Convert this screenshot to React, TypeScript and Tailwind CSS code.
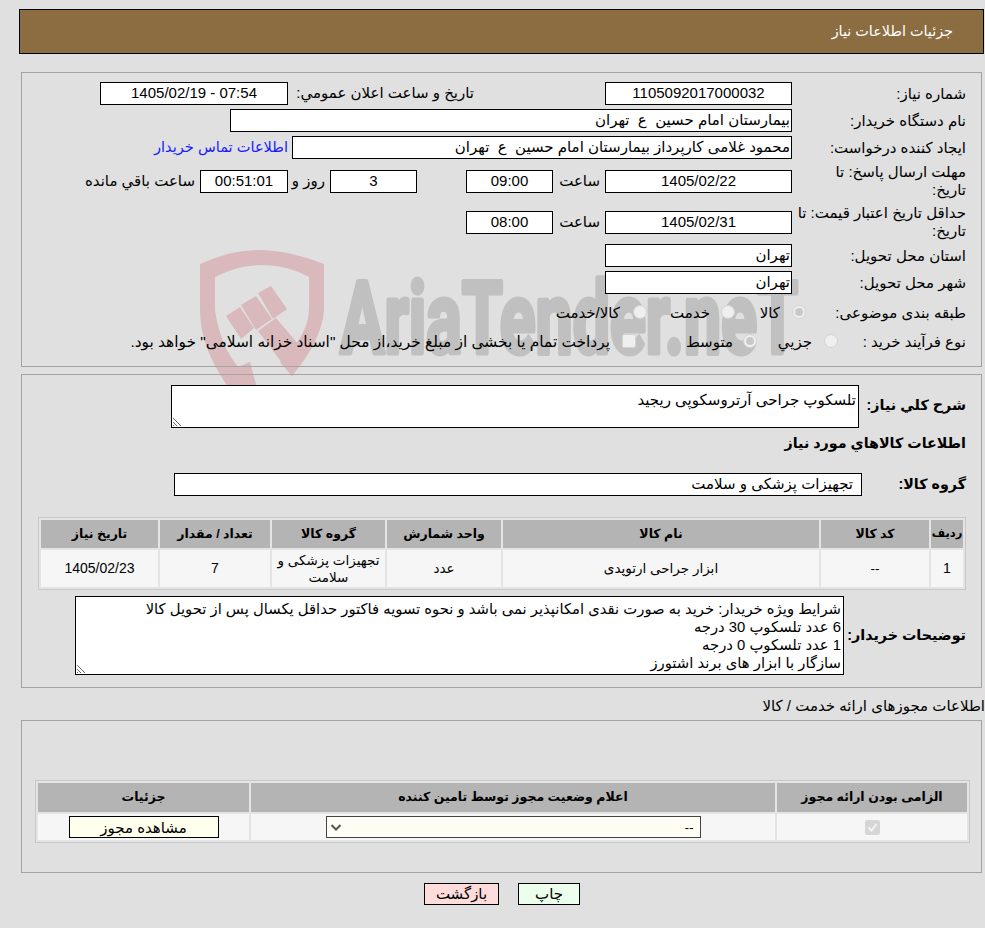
const font = "font-['Liberation_Sans','DejaVu_Sans',sans-serif]";

function Box({ className = "", children }: { className?: string; children?: React.ReactNode }) {
  return (
    <div className={`flex h-[23px] shrink-0 items-center justify-center border border-black bg-white text-[15px] text-black ${className}`}>
      {children}
    </div>
  );
}

function Label({ className = "w-[174px]", children }: { className?: string; children: React.ReactNode }) {
  return <div className={`shrink-0 pl-[4px] text-right text-[15px] leading-[18px] ${className}`}>{children}</div>;
}

function Radio({ checked = false }: { checked?: boolean }) {
  return (
    <span className="-mt-[3px] flex h-[14px] w-[14px] shrink-0 items-center justify-center rounded-full border border-[#d2d2d2] bg-[#efefef]">
      {checked && <span className="h-[8px] w-[8px] rounded-full bg-[#c8c8c8]" />}
    </span>
  );
}

function Watermark() {
  return (
    <svg className="absolute left-[195px] top-[245px] [direction:ltr]" width="620" height="150" viewBox="195 245 620 150" fill="none">
      <path
        d="M262 250 Q295 252 324 264 L324 310 Q322 340 292 376 L280 362 Q309 335 309 308 L309 277 Q287 265 262 265 Q238 265 215 277 L215 310 Q220 345 238 367 L250 362 L258 392 L232 392 Q200 350 200 310 L200 264 Q230 250 262 250 Z"
        fill="#d9b9bb"
      />
      <path
        d="M226 316 L240 307 L254 328 L241 339 Z M241 305 L256 296 L272 319 L256 330 Z M258 293 L271 286 L287 309 L273 319 Z M258 331 L276 318 L305 352 L292 376 Z"
        fill="#d9b9bb"
      />
      <text
        x="340"
        y="353"
        fontFamily="Roboto, sans-serif"
        fontWeight="700"
        fontSize="100"
        fill="#c0c0c0"
        stroke="#c0c0c0"
        strokeWidth="5"
        strokeLinejoin="round"
        textLength="458"
        lengthAdjust="spacingAndGlyphs"
      >
        AriaTender.neT
      </text>
    </svg>
  );
}

function Grip() {
  return (
    <svg className="absolute bottom-0 left-0" width="11" height="11" viewBox="0 0 11 11" stroke="#666" strokeWidth="1">
      <path d="M1 2 L9 10 M1 6 L5 10 M1 9 L2 10" />
    </svg>
  );
}

function Th({ className = "text-[12.5px]", children }: { className?: string; children: React.ReactNode }) {
  return <th className={`bg-[#b4b4b4] text-center align-middle font-bold text-black ${className}`}>{children}</th>;
}

function Td({ className = "text-[13.5px]", children }: { className?: string; children?: React.ReactNode }) {
  return <td className={`bg-[#f6f6f6] text-center align-middle leading-[17px] text-black ${className}`}>{children}</td>;
}

export default function App() {
  return (
    <div dir="rtl" className={`relative isolate h-[928px] w-[985px] overflow-hidden bg-[#e0e0e0] text-black ${font}`}>
      <Watermark />
      <div className="relative pt-[9px]">
        <div className="mr-[1px] ml-[19px] flex h-[45px] items-center border border-black bg-[#8c6d42] pr-[30px] text-[14.4px] text-white">
          جزئیات اطلاعات نیاز
        </div>

        <div className="mt-[18px] mr-[3px] ml-[21px] h-[295px] border border-[#a3a3a3] pt-[9px] pr-[15px]">
          <div className="flex h-[23px] items-center">
            <Label>شماره نیاز:</Label>
            <Box className="w-[187px]">1105092017000032</Box>
            <div className="mr-[131px] w-[186px] whitespace-nowrap text-[15px]">تاریخ و ساعت اعلان عمومي:</div>
            <Box className="w-[188px]">07:54 - 1405/02/19</Box>
          </div>
          <div className="mt-[4px] flex h-[23px] items-center">
            <Label>نام دستگاه خریدار:</Label>
            <Box className="w-[562px] justify-start pr-[1px]">بیمارستان امام حسین&nbsp; ع&nbsp; تهران</Box>
          </div>
          <div className="mt-[4px] flex h-[23px] items-center">
            <Label>ایجاد کننده درخواست:</Label>
            <Box className="w-[500px] justify-start pr-[1px]">محمود غلامی کارپرداز بیمارستان امام حسین&nbsp; ع&nbsp; تهران</Box>
            <div className="mr-[4px] whitespace-nowrap text-[14.6px] text-[#1a1aff]">اطلاعات تماس خریدار</div>
          </div>
          <div className="mt-[4px] flex h-[36px] items-center">
            <Label>
              مهلت ارسال پاسخ: تا
              <br />
              تاریخ:
            </Label>
            <Box className="w-[187px]">1405/02/22</Box>
            <div className="w-[52px] pr-[5px] text-[15px]">ساعت</div>
            <Box className="w-[87px]">09:00</Box>
            <div className="w-[49px]" />
            <Box className="w-[87px]">3</Box>
            <div className="w-[42px] pr-[5px] text-[15px]">روز و</div>
            <Box className="w-[88px] bg-[#fdfde8]">00:51:01</Box>
            <div className="mr-[5px] whitespace-nowrap text-[15px]">ساعت باقي مانده</div>
          </div>
          <div className="mt-[5px] flex h-[36px] items-center">
            <Label>حداقل تاریخ اعتبار قیمت: تا تاریخ:</Label>
            <Box className="w-[187px]">1405/02/31</Box>
            <div className="w-[52px] pr-[5px] text-[15px]">ساعت</div>
            <Box className="w-[87px]">08:00</Box>
          </div>
          <div className="mt-[4px] flex h-[23px] items-center">
            <Label>استان محل تحویل:</Label>
            <Box className="w-[187px] justify-start pr-[1px]">تهران</Box>
          </div>
          <div className="mt-[4px] flex h-[23px] items-center">
            <Label>شهر محل تحویل:</Label>
            <Box className="w-[187px] justify-start pr-[1px]">تهران</Box>
          </div>
          <div className="mt-[8px] flex h-[22px] items-center text-[15px]">
            <Label className="w-[160px]">طبقه بندی موضوعی:</Label>
            <Radio checked />
            <span className="w-[57px] pr-[12px]">کالا</span>
            <Radio />
            <span className="w-[74px] pr-[11px]">خدمت</span>
            <Radio />
            <span className="pr-[13px]">کالا/خدمت</span>
          </div>
          <div className="mt-[7px] flex h-[22px] items-center text-[15px]">
            <Label className="w-[128px]">نوع فرآیند خرید :</Label>
            <Radio />
            <span className="w-[67px] pr-[12px]">جزیي</span>
            <Radio checked />
            <span className="w-[107px] pr-[10px]">متوسط</span>
            <span className="-mt-[3px] h-[14px] w-[14px] shrink-0 rounded-[2px] border border-[#d2d2d2] bg-[#efefef]" />
            <span className="whitespace-nowrap pr-[12px] text-[15.4px]">پرداخت تمام یا بخشی از مبلغ خرید،از محل "اسناد خزانه اسلامی" خواهد بود.</span>
          </div>
        </div>

        <div className="mt-[7px] mr-[3px] ml-[21px] h-[314px] border border-[#a3a3a3] pt-[10px]">
          <div className="flex">
            <div className="mr-[15px] flex w-[107px] shrink-0 items-center whitespace-nowrap pb-[1px] text-[14.3px] font-bold">شرح کلي نیاز:</div>
            <div className="relative h-[43px] w-[688px] border border-black bg-white pt-[3px] pr-[2px] text-[15px] leading-[21px]">
              تلسکوپ جراحی آرتروسکوپی ریجید
              <Grip />
            </div>
          </div>
          <div className="mt-[4px] mr-[15px] text-[14.3px] font-bold leading-[22px]">اطلاعات کالاهاي مورد نیاز</div>
          <div className="mt-[19px] flex items-center">
            <div className="mr-[15px] w-[104px] shrink-0 text-[14.3px] font-bold">گروه کالا:</div>
            <Box className="w-[688px] justify-start pr-[8px]">تجهیزات پزشکی و سلامت</Box>
          </div>
          <table className="mt-[21px] mr-[15px] w-[928px] border-separate border-spacing-[2px] border border-[#c8c8c8] bg-[#e4e4e4] [table-layout:fixed]">
            <colgroup>
              <col className="w-[32px]" />
              <col className="w-[108px]" />
              <col className="w-[316px]" />
              <col className="w-[114px]" />
              <col className="w-[113px]" />
              <col className="w-[110px]" />
              <col className="w-[117px]" />
            </colgroup>
            <thead>
              <tr className="h-[28px]">
                <Th className="text-[11.5px]">ردیف</Th>
                <Th>کد کالا</Th>
                <Th>نام کالا</Th>
                <Th>واحد شمارش</Th>
                <Th>گروه کالا</Th>
                <Th>تعداد / مقدار</Th>
                <Th>تاریخ نیاز</Th>
              </tr>
            </thead>
            <tbody>
              <tr className="h-[37px]">
                <Td className="text-[14px]">1</Td>
                <Td>--</Td>
                <Td>ابزار جراحی ارتوپدی</Td>
                <Td>عدد</Td>
                <Td>تجهیزات پزشکی و سلامت</Td>
                <Td className="text-[14px]">7</Td>
                <Td className="text-[14px]">1405/02/23</Td>
              </tr>
            </tbody>
          </table>
          <div className="mt-[6px] flex">
            <div className="mr-[15px] flex w-[122px] shrink-0 items-center whitespace-nowrap text-[14.3px] font-bold">توضیحات خریدار:</div>
            <div className="relative h-[79px] w-[769px] border border-black bg-white pt-[3px] pr-[2px] text-[14.8px] leading-[18px]">
              <div>شرایط ویژه خریدار: خرید به صورت نقدی امکانپذیر نمی باشد و نحوه تسویه فاکتور حداقل یکسال پس از تحویل کالا</div>
              <div>6 عدد تلسکوپ 30 درجه</div>
              <div>1 عدد تلسکوپ 0 درجه</div>
              <div>سازگار با ابزار های برند اشتورز</div>
              <Grip />
            </div>
          </div>
        </div>

        <div className="mt-[7px] h-[25px] text-[15px] leading-[22px]">اطلاعات مجوزهای ارائه خدمت / کالا</div>

        <div className="mr-[3px] ml-[21px] h-[153px] border border-[#a3a3a3] pt-[59px]">
          <table className="mr-[11px] w-[935px] border-separate border-spacing-[2px] border border-[#c8c8c8] bg-[#e4e4e4] [table-layout:fixed]">
            <colgroup>
              <col className="w-[190px]" />
              <col className="w-[524px]" />
              <col className="w-[211px]" />
            </colgroup>
            <thead>
              <tr className="h-[29px]">
                <Th>الزامی بودن ارائه مجوز</Th>
                <Th>اعلام وضعیت مجوز توسط تامین کننده</Th>
                <Th>جزئیات</Th>
              </tr>
            </thead>
            <tbody>
              <tr className="h-[26px]">
                <Td>
                  <span className="mx-auto flex h-[15px] w-[15px] items-center justify-center rounded-[2px] bg-[#d6d6d6]">
                    <svg width="11" height="11" viewBox="0 0 11 11" fill="none" stroke="#f4f4f4" strokeWidth="2">
                      <path d="M1.5 5.5 L4.5 8.5 L9.5 2" />
                    </svg>
                  </span>
                </Td>
                <Td>
                  <div className="mx-auto flex h-[22px] w-[375px] items-center justify-between border border-[#444] bg-[#fdfdf3] pr-[6px] pl-[2px] text-[13px]">
                    <span>--</span>
                    <svg width="14" height="14" viewBox="0 0 14 14" fill="none" stroke="#555" strokeWidth="2">
                      <path d="M2.5 5 L7 9.5 L11.5 5" />
                    </svg>
                  </div>
                </Td>
                <Td>
                  <div className="mx-auto flex h-[22px] w-[150px] items-center justify-center border border-black bg-[#ffffee] text-[15px]">
                    مشاهده مجوز
                  </div>
                </Td>
              </tr>
            </tbody>
          </table>
        </div>

        <div className="mt-[10px] flex justify-center gap-[19px] pl-[19px]">
          <div className="flex h-[22px] w-[62px] items-center justify-center border border-black bg-[#ecffec] text-[15px]">چاپ</div>
          <div className="flex h-[22px] w-[75px] items-center justify-center border border-black bg-[#ffdcdc] text-[15px]">بازگشت</div>
        </div>
      </div>
    </div>
  );
}
